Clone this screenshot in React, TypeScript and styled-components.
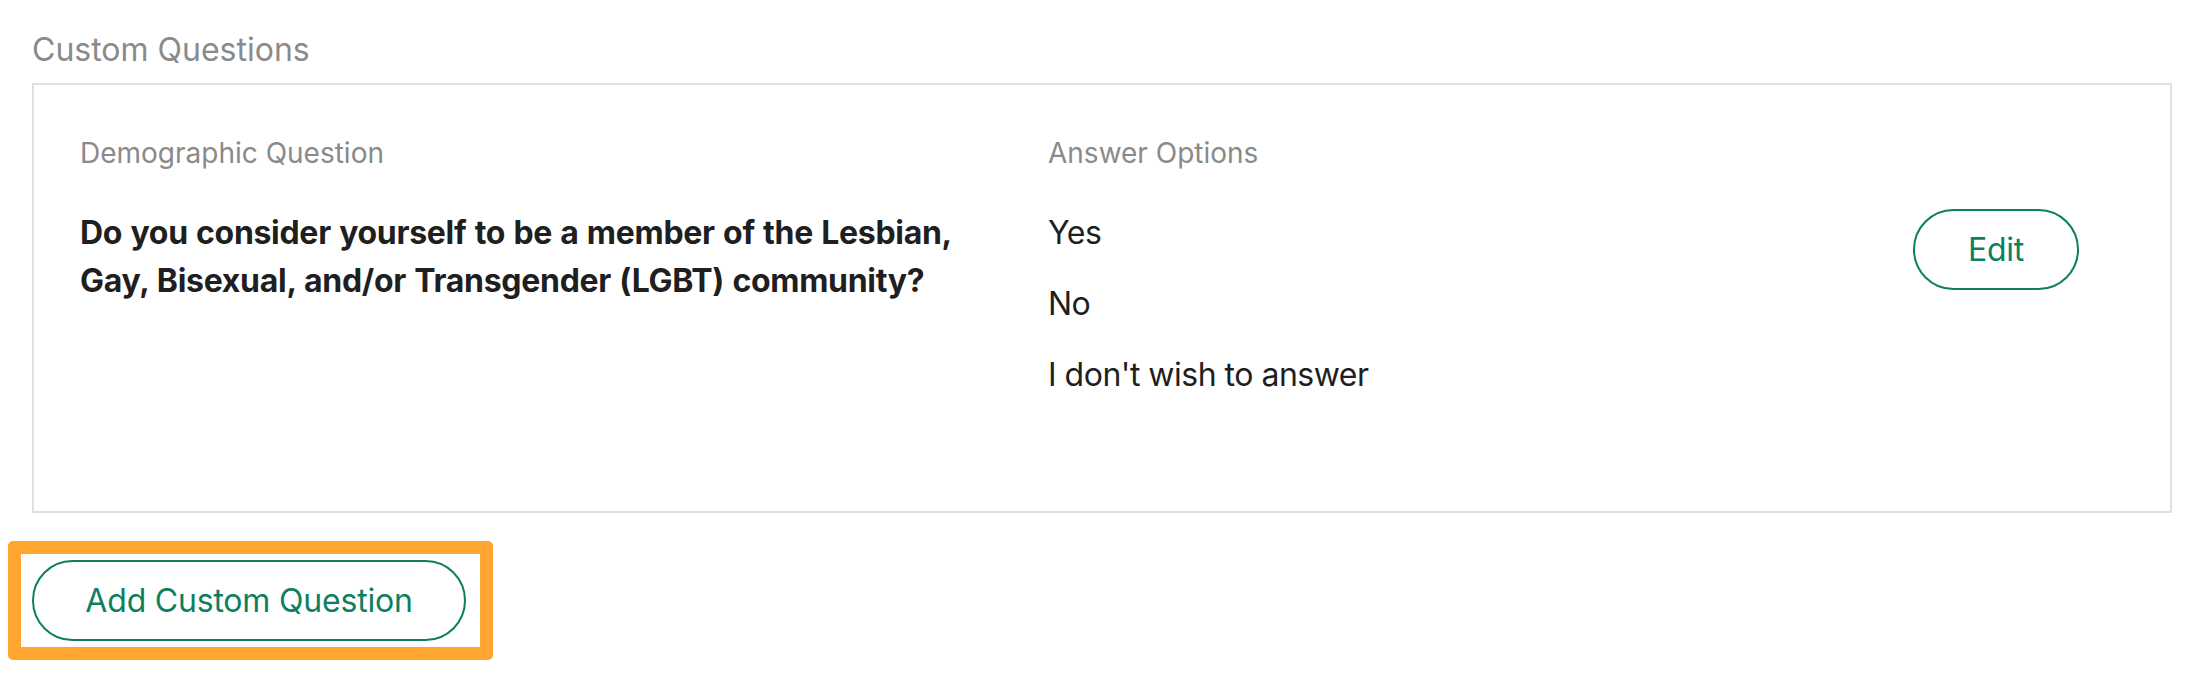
import React from "react";
import styled, { createGlobalStyle } from "styled-components";

const GlobalStyle = createGlobalStyle`
  html, body {
    margin: 0;
    padding: 0;
    background: #ffffff;
  }
  body {
    font-family: Inter, "Noto Sans", "Liberation Sans", sans-serif;
    color: #1f1f1f;
  }
`;

const Page = styled.div`
  width: 2208px;
  height: 676px;
  box-sizing: border-box;
  padding: 26px 36px 0 32px;
  display: flex;
  flex-direction: column;
  align-items: flex-start;
`;

const SectionTitle = styled.h2`
  margin: 0 0 9px;
  font-size: 32px;
  line-height: 48px;
  font-weight: 400;
  color: #8a8a8a;
`;

const Card = styled.section`
  align-self: stretch;
  box-sizing: border-box;
  border: 2px solid #e0e0e0;
  padding: 48px 91px 112px 46px;
  display: grid;
  grid-template-columns: 968px 1fr 166px;
  align-items: start;
`;

const Column = styled.div`
  display: flex;
  flex-direction: column;
  gap: 36px;
  padding-right: 48px;
`;

const Label = styled.div`
  font-size: 28px;
  line-height: 40px;
  font-weight: 400;
  color: #8a8a8a;
`;

const QuestionText = styled.p`
  margin: 0;
  font-size: 32px;
  line-height: 48px;
  font-weight: 700;
  letter-spacing: -0.3px;
  word-spacing: 1px;
  color: #1f1f1f;
  max-width: 880px;
`;

const AnswerList = styled.ul`
  list-style: none;
  margin: 0;
  padding: 0;
  display: flex;
  flex-direction: column;
  gap: 23px;
`;

const Answer = styled.li`
  font-size: 32px;
  line-height: 48px;
  color: #1f1f1f;
  letter-spacing: -0.5px;
`;

const ActionCell = styled.div`
  padding-top: 76px;
`;

const PillButton = styled.button<{ $wide?: boolean }>`
  box-sizing: border-box;
  height: 81px;
  width: ${(p) => (p.$wide ? "434px" : "166px")};
  border: 2px solid #0d7f5e;
  border-radius: 41px;
  background: #ffffff;
  color: #0d7f5e;
  font-family: Inter, "Noto Sans", "Liberation Sans", sans-serif;
  font-size: 32px;
  font-weight: 400;
  letter-spacing: -0.2px;
  display: flex;
  align-items: center;
  justify-content: center;
  padding: 0;
  cursor: pointer;
`;

const Footer = styled.div`
  margin-top: 47px;
`;

const Highlight = styled.div`
  position: relative;
  display: inline-block;

  &::after {
    content: "";
    position: absolute;
    top: -19px;
    left: -24px;
    right: -27px;
    bottom: -19px;
    border: 13px solid #ffa530;
    border-radius: 5px;
    pointer-events: none;
  }
`;

const answers = ["Yes", "No", "I don't wish to answer"];

export default function App() {
  return (
    <>
      <GlobalStyle />
      <Page>
        <SectionTitle>Custom Questions</SectionTitle>
        <Card>
          <Column>
            <Label>Demographic Question</Label>
            <QuestionText>
              Do you consider yourself to be a member of the Lesbian, Gay,
              Bisexual, and/or Transgender (LGBT) community?
            </QuestionText>
          </Column>
          <Column>
            <Label>Answer Options</Label>
            <AnswerList>
              {answers.map((a) => (
                <Answer key={a}>{a}</Answer>
              ))}
            </AnswerList>
          </Column>
          <ActionCell>
            <PillButton type="button">Edit</PillButton>
          </ActionCell>
        </Card>
        <Footer>
          <Highlight>
            <PillButton type="button" $wide>
              Add Custom Question
            </PillButton>
          </Highlight>
        </Footer>
      </Page>
    </>
  );
}
